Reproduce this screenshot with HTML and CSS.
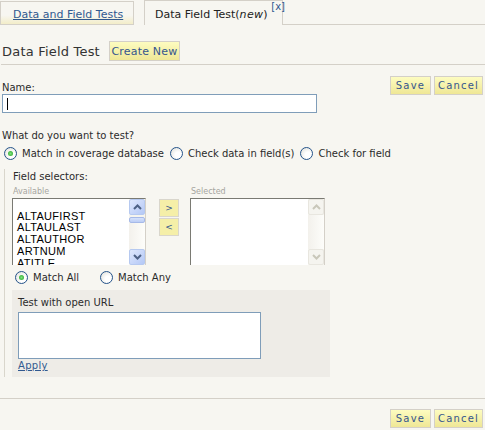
FILE: index.html
```html
<!DOCTYPE html>
<html>
<head>
<meta charset="utf-8">
<link rel="stylesheet" href="styles.css">
</head>
<body>
<div class="tabs">
  <div class="tab tab-inactive"><a href="#" class="link">Data and Field Tests</a></div>
  <div class="tab tab-active">Data Field Test(<i>new</i>)<span class="close">[x]</span></div>
  <div class="tabs-fill"></div>
</div>

<div class="head">
  <span class="title">Data Field Test</span>
  <span class="btn btn-create">Create New</span>
</div>

<div class="form">
  <div class="top-actions">
    <span class="btn btn-save">Save</span>
    <span class="btn btn-cancel">Cancel</span>
  </div>
  <div class="label name-label">Name:</div>
  <div class="input name-input"><span class="caret"></span></div>

  <div class="label q-label">What do you want to test?</div>
  <div class="radios">
    <span class="radio checked"></span><span class="rlabel">Match in coverage database</span>
    <span class="radio"></span><span class="rlabel">Check data in field(s)</span>
    <span class="radio"></span><span class="rlabel">Check for field</span>
  </div>

  <div class="fieldset">
    <div class="label fs-label">Field selectors:</div>
    <div class="selectors">
      <div class="col">
        <div class="sub">Available</div>
        <div class="listbox">
          <div class="items">
            <div class="item">&nbsp;</div>
            <div class="item">ALTAUFIRST</div>
            <div class="item">ALTAULAST</div>
            <div class="item">ALTAUTHOR</div>
            <div class="item">ARTNUM</div>
            <div class="item">ATITLE</div>
          </div>
          <div class="sbar">
            <div class="sbtn up"><svg width="9" height="6" viewBox="0 0 9 6"><path d="M1 5 L4.5 1.5 L8 5" fill="none" stroke="#4d6185" stroke-width="2"/></svg></div>
            <div class="thumb"></div>
            <div class="track"></div>
            <div class="sbtn down"><svg width="9" height="6" viewBox="0 0 9 6"><path d="M1 1 L4.5 4.5 L8 1" fill="none" stroke="#4d6185" stroke-width="2"/></svg></div>
          </div>
        </div>
      </div>
      <div class="movers">
        <span class="mbtn">&gt;</span>
        <span class="mbtn">&lt;</span>
      </div>
      <div class="col">
        <div class="sub">Selected</div>
        <div class="listbox">
          <div class="items"></div>
          <div class="sbar disabled">
            <div class="sbtn up"><svg width="9" height="6" viewBox="0 0 9 6"><path d="M1 5 L4.5 1.5 L8 5" fill="none" stroke="#c9c7ba" stroke-width="2"/></svg></div>
            <div class="track"></div>
            <div class="sbtn down"><svg width="9" height="6" viewBox="0 0 9 6"><path d="M1 1 L4.5 4.5 L8 1" fill="none" stroke="#c9c7ba" stroke-width="2"/></svg></div>
          </div>
        </div>
      </div>
    </div>
    <div class="radios match">
      <span class="radio checked"></span><span class="rlabel">Match All</span>
      <span class="radio"></span><span class="rlabel">Match Any</span>
    </div>
    <div class="urlbox">
      <div class="label">Test with open URL</div>
      <div class="input url-input"></div>
      <a href="#" class="link apply">Apply</a>
    </div>
  </div>
</div>

<div class="footer">
  <span class="btn btn-save">Save</span>
  <span class="btn btn-cancel">Cancel</span>
</div>
</body>
</html>
```
FILE: styles.css
```css
* { box-sizing: border-box; }
body {
  margin: 0;
  background: #f7f6f1;
  font-family: "DejaVu Sans", Verdana, sans-serif;
  font-size: 10px;
  color: #2b2b2b;
}
.link { color: #31598f; text-decoration: underline; }

.tabs {
  display: flex;
  align-items: flex-end;
  height: 25px;
}
.tab {
  height: 24px;
  border: 1px solid #d4d0c8;
  display: flex;
  align-items: center;
  font-size: 11px;
}
.tab-inactive {
  width: 134px;
  padding-left: 12px;
  padding-top: 3px;
  background: linear-gradient(#f7f6f1 60%, #f3edc9);
}
.tab-active {
  position: relative;
  width: 139px;
  margin-left: 10px;
  border-bottom: none;
  height: 25px;
  padding-left: 10px;
  padding-top: 2px;
  color: #222;
}
.tab-active i { letter-spacing: 0.3px; }
.close {
  position: absolute;
  right: -3px;
  top: 0;
  font-size: 10px;
  color: #31598f;
  line-height: 11px;
}
.tabs-fill {
  flex: 1;
  border-bottom: 1px solid #d4d0c8;
  height: 1px;
}

.head {
  display: flex;
  align-items: center;
  gap: 9px;
  padding: 16px 0 2px 1px;
  border-bottom: 1px solid #d4d0c8;
  margin-left: 1px;
}
.title { font-size: 13px; color: #333; letter-spacing: 0.2px; }

.btn {
  display: inline-flex;
  align-items: center;
  justify-content: center;
  height: 20px;
  border: 1px solid #d4d0c8;
  background: linear-gradient(#fdfcc0, #efe796);
  color: #34558d;
  font-size: 10px;
  letter-spacing: 0.3px;
}
.btn-create { width: 71px; font-size: 11px; letter-spacing: 0.2px; margin-bottom: 1px; }
.btn-save { width: 41px; height: 19px; letter-spacing: 1.2px; }
.btn-cancel { width: 49px; height: 19px; letter-spacing: 1.2px; }

.form { padding: 11px 0 0 2px; }
.top-actions {
  display: flex;
  justify-content: flex-end;
  gap: 3px;
  padding-right: 2px;
  height: 19px;
  margin-bottom: -13px;
}
.label { line-height: 12px; }
.input {
  background: #fff;
  border: 1px solid #7f9db9;
}
.name-input {
  width: 315px;
  height: 19px;
  padding: 3px 0 0 4px;
}
.caret { display: block; width: 1px; height: 12px; background: #000; }

.q-label { margin-top: 17px; }
.radios {
  display: flex;
  align-items: center;
  height: 14px;
  margin-top: 4px;
}
.radio {
  width: 13px;
  height: 13px;
  border-radius: 50%;
  border: 1px solid #24538a;
  background: radial-gradient(circle at 65% 65%, #fff 30%, #dcdcd5 100%);
  position: relative;
  margin-left: 6px;
  flex: none;
}
.radio.checked::after {
  content: "";
  position: absolute;
  left: 3px; top: 3px;
  width: 5px; height: 5px;
  border-radius: 50%;
  background: radial-gradient(circle, #7ee27e, #21a121);
}
.rlabel { margin-left: 5px; padding-top: 1px; }
.radios .radio:first-child { margin-left: 2px; }

.fieldset {
  margin: 9px 0 0 2px;
  border-left: 1px solid #d9d6cc;
  padding: 2px 0 0 7px;
  width: 330px;
}
.fs-label { margin-left: 1px; }
.selectors {
  display: flex;
  margin-top: 4px;
}
.col { display: flex; flex-direction: column; }
.sub { font-size: 8px; color: #a6a5a0; line-height: 10px; margin-left: 1px; margin-bottom: 1px; }
.listbox {
  width: 134px;
  height: 67px;
  display: flex;
  border-top: 1px solid #7a7a73;
  border-left: 1px solid #7a7a73;
  border-right: 1px solid #d4d0c8;
  background: #fff;
  overflow: hidden;
}
.items {
  flex: 1;
  font-family: "Liberation Sans", Arial, sans-serif;
  font-size: 11px;
  color: #000;
  padding-left: 4px;
  letter-spacing: 0.3px;
}
.item { line-height: 11.7px; }
.sbar {
  width: 16px;
  display: flex;
  flex-direction: column;
  background: #f5f4ee;
}
.sbtn {
  width: 16px; height: 16px;
  border: 1px solid #b6c9f0;
  border-radius: 2px;
  background: linear-gradient(135deg, #dfe8fd, #b4c8f6);
  display: flex; align-items: center; justify-content: center;
}
.thumb {
  height: 6px;
  border: 1px solid #a6b9e8;
  border-radius: 2px;
  background: linear-gradient(#d6e2fb, #bccdf5);
  margin-top: 2px;
}
.track { flex: 1; background: linear-gradient(90deg, #f3f1ec, #fdfdfa); }
.sbar.disabled .sbtn {
  border-color: #e8e6df;
  background: #f5f4ef;
}
.movers {
  display: flex;
  flex-direction: column;
  gap: 1px;
  margin: 12px 11px 0 13px;
}
.mbtn {
  width: 20px; height: 18px;
  border: 1px solid #d9d6cc;
  background: #f5efa8;
  color: #34558d;
  font-size: 9px;
  display: flex; align-items: center; justify-content: center;
}
.col:last-child .listbox { width: 135px; }
.radios.match { margin-top: 5px; margin-left: 1px; }
.match .radio { margin-left: 21px; }
.urlbox {
  margin-top: 6px;
  width: 318px;
  background: #eeece7;
  padding: 7px 6px 6px 6px;
}
.url-input { width: 243px; height: 47px; margin-top: 3px; }
.apply { display: inline-block; margin-top: 1px; letter-spacing: 0.3px; }

.footer {
  margin-top: 21px;
  border-top: 1px solid #d4d0c8;
  display: flex;
  justify-content: flex-end;
  gap: 3px;
  padding: 10px 2px 0 0;
}
```
